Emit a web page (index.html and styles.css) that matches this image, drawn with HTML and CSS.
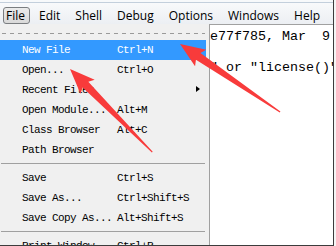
FILE: index.html
```html
<!DOCTYPE html>
<html lang="en">
<head>
    <meta charset="UTF-8">
    <title>IDLE Shell</title>
    <link rel="stylesheet" href="styles.css">
</head>
<body>
<div class="window">
    <div class="titlestrip"></div>
    <div class="menubar">
        <span class="menu active">File</span>
        <span class="menu">Edit</span>
        <span class="menu">Shell</span>
        <span class="menu">Debug</span>
        <span class="menu">Options</span>
        <span class="menu">Windows</span>
        <span class="menu">Help</span>
    </div>
    <div class="shell">
        <div class="line">Python 3.8.0 (tags/v3.8.0:e77f785, Mar  9 2020, 13:29:32) [MSC v.1916 64 bit</div>
        <div class="line">(AMD64)] on win32</div>
        <div class="line">Type "copyright", "credits" or "license()" for more information.</div>
        <div class="line">&gt;&gt;&gt; </div>
    </div>
    <div class="dropdown">
        <div class="tearoff"></div>
        <div class="item hl"><span>New File</span><span>Ctrl+N</span></div>
        <div class="item"><span>Open...</span><span>Ctrl+O</span></div>
        <div class="item"><span>Recent Files</span><span></span><span class="sub"></span></div>
        <div class="item"><span>Open Module...</span><span>Alt+M</span></div>
        <div class="item"><span>Class Browser</span><span>Alt+C</span></div>
        <div class="item"><span>Path Browser</span><span></span></div>
        <div class="sep"></div>
        <div class="item"><span>Save</span><span>Ctrl+S</span></div>
        <div class="item"><span>Save As...</span><span>Ctrl+Shift+S</span></div>
        <div class="item"><span>Save Copy As...</span><span>Alt+Shift+S</span></div>
        <div class="sep"></div>
        <div class="item"><span>Print Window</span><span>Ctrl+P</span></div>
    </div>
    <svg class="arrows" width="336" height="246" viewBox="0 0 336 246">
        <polygon points="0,0 25,-10 22,-4 121,-0.6 121,0.6 22,4 25,10" transform="translate(180 44) rotate(34.2)"/>
        <polygon points="0,0 25,-10 22,-4 117,-0.6 117,0.6 22,4 25,10" transform="translate(70 69) rotate(45.3)"/>
    </svg>
</div>
</body>
</html>
```
FILE: styles.css
```css
*{
    margin:0;
    padding:0;
    box-sizing:border-box;
}
body{
    background-color:#f5f5f5;
}
.window{
    position:relative;
    width:334px;
    height:246px;
    display:flex;
    flex-direction:column;
    overflow:hidden;
    border-right:1px solid #3c3c3c;
    border-bottom:1px solid #3c3c3c;
    background:#fff;
}
.titlestrip{
    height:3px;
    background:#f7f9fb;
    border-bottom:1px solid #c3cfdc;
}
.menubar{
    height:21px;
    padding:4px 0 0 3px;
    display:flex;
    background:linear-gradient(#f8f9fb,#eceff3);
    font-family:"Open Sans",sans-serif;
    font-size:12px;
    color:#000;
}
.menu{
    height:17px;
    line-height:15px;
    padding:0 4px 0 2px;
    margin-right:7px;
    border:1px solid transparent;
    border-radius:3px;
}
.menu.active{
    margin-right:6px;
    border-color:#7a7d80;
    background:linear-gradient(#ebebeb,#d9d9d9);
}
.shell{
    flex:1;
    border-top:1px solid #a0a0a0;
    padding:3.5px 0 0 2px;
    font-family:"Liberation Mono",monospace;
    font-size:13.33px;
    line-height:15.5px;
    color:#000;
    overflow:hidden;
}
.line{
    white-space:pre;
}
.dropdown{
    position:absolute;
    left:0;
    top:24px;
    width:210px;
    height:240px;
    padding-right:3px;
    background:#f0f0f0;
    border-right:1px solid #a0a0a0;
    font-family:"Liberation Mono",monospace;
    font-size:11px;
    letter-spacing:-0.6px;
    color:#000;
}
.tearoff{
    height:16px;
    margin:0 1px 0 2px;
    background-image:repeating-linear-gradient(to right,#9a9a9a 0 4px,transparent 4px 8px);
    background-size:100% 1px;
    background-position:0 9px;
    background-repeat:no-repeat;
}
.item{
    height:20px;
    padding:1px 6px 0 22px;
    line-height:19px;
    display:grid;
    grid-template-columns:95px 1fr auto;
    align-items:center;
    white-space:pre;
}
.item.hl{
    background:#3399ff;
    color:#fff;
}
.sub{
    width:0;
    height:0;
    margin-bottom:3px;
    border-left:4px solid #000;
    border-top:3.5px solid transparent;
    border-bottom:3.5px solid transparent;
}
.sep{
    height:5px;
    margin:3px 1px 0 1px;
    border-top:1px solid #a0a0a0;
}
.arrows{
    position:absolute;
    left:0;
    top:0;
    pointer-events:none;
}
.arrows polygon{
    fill:#f83b3b;
}
```
